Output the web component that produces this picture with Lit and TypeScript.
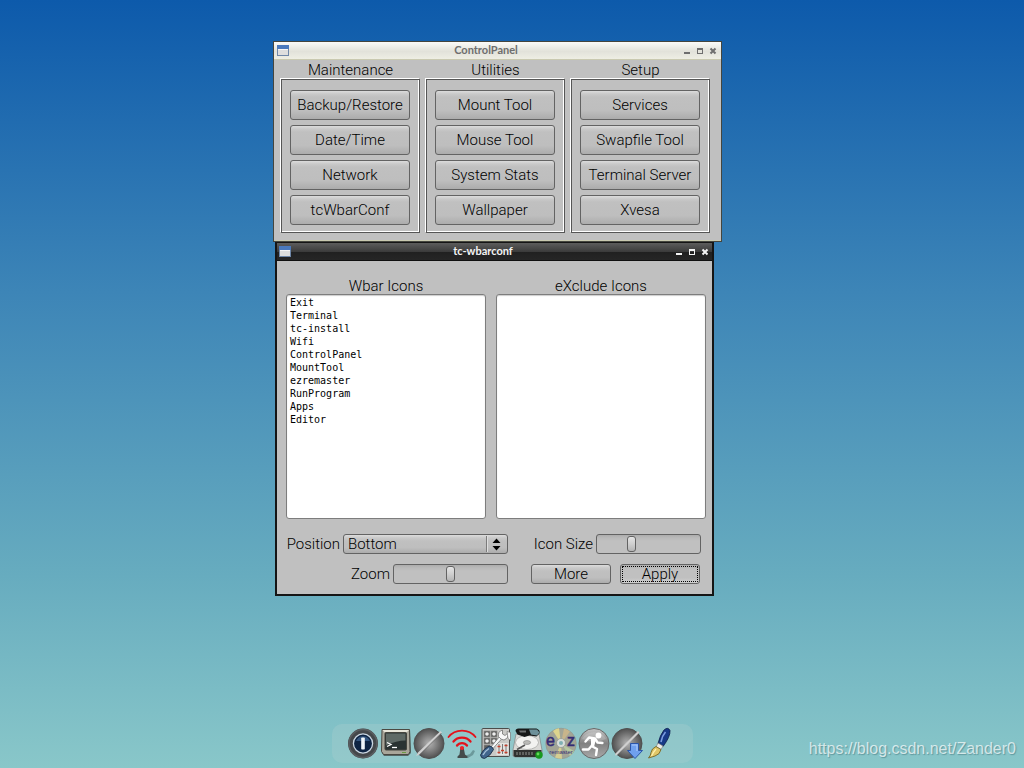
import { LitElement, html, css, svg } from "lit";
import { customElement, property } from "lit/decorators.js";

const GROUPS = [
  { title: "Maintenance", tools: ["Backup/Restore", "Date/Time", "Network", "tcWbarConf"] },
  { title: "Utilities", tools: ["Mount Tool", "Mouse Tool", "System Stats", "Wallpaper"] },
  { title: "Setup", tools: ["Services", "Swapfile Tool", "Terminal Server", "Xvesa"] },
];

const WBAR_ICONS = [
  "Exit", "Terminal", "tc-install", "Wifi", "ControlPanel",
  "MountTool", "ezremaster", "RunProgram", "Apps", "Editor",
];

/* Dock artwork, each on a 32 x 32 grid. */
const DOCK = [
  {
    name: "Exit",
    art: svg`
      <circle cx="16" cy="16.5" r="15" fill="#45484b"/>
      <circle cx="16" cy="16.5" r="14" fill="none" stroke="#5a5e61" stroke-width="1.5"/>
      <circle cx="16" cy="16.5" r="9.600" fill="#0e2443" stroke="#c9d6e2" stroke-width="1.300"/>
      <path d="M9 14a7.500 7.500 0 0 1 14 0z" fill="#33557f"/>
      <rect x="14.200" y="10.500" width="3.600" height="12" rx="0.800" fill="#f1f6fa"/>`,
  },
  {
    name: "Terminal",
    art: svg`
      <path d="M3 3h27l1 23-3 3H4l-2-3z" fill="#33332e" opacity=".65"/>
      <path d="M2 2.500h27.500l.5 22-1.500 3H3.500l-2-3z" fill="#a9a69a" stroke="#4b4942"/>
      <path d="M2.500 3h26.500l-2.500 2.500H5z" fill="#e8e6da"/>
      <rect x="5" y="5.500" width="21.500" height="17.500" rx="1" fill="#2a3332" stroke="#45453e"/>
      <path d="M6 6.500h19.500v7q-9 0-19.500 5z" fill="#5f6a66"/>
      <path d="M7 15.500l4 2-4 2" fill="none" stroke="#fff" stroke-width="1.300"/>
      <path d="M12 20.500h5" stroke="#fff" stroke-width="1.300"/>
      <path d="M22 25.500h4" stroke="#6c9c44" stroke-width="1"/>`,
  },
  {
    name: "tc-install",
    art: svg`
      <circle cx="16" cy="16.500" r="15" fill="url(#sphere)" stroke="#505050"/>
      <path d="M27.500 4l1.500 1.500L6.500 27.500l-3.500 1.500L5 25.500z" fill="#cfcfcf"/>
      <path d="M28.500 6L7 27.500" stroke="#666" stroke-width=".7"/>`,
  },
  {
    name: "Wifi",
    art: svg`
      <path d="M18 29l6-2 3-4 2 1-2 4-5 3z" fill="#51797c" opacity=".6"/>
      <path d="M14.500 20h3l1.500 7.500 2.500 2v1.500h-10v-1.500l2-2z" fill="#444c4c"/>
      <g fill="none" stroke="#e3121b" stroke-linecap="round" stroke-width="2.300">
        <path d="M2.500 10a16.500 15 0 0 1 27 0" stroke-width="1.800"/>
        <path d="M7.500 14.500a10.500 9.500 0 0 1 17 0"/>
        <path d="M11 18.500a6 5.500 0 0 1 10 0"/>
      </g>
      <circle cx="16" cy="21" r="2" fill="#f02329"/>`,
  },
  {
    name: "ControlPanel",
    art: svg`
      <rect x="3" y="1.500" width="27.500" height="28" rx="1" fill="#c9c9c6" stroke="#4c4c4a"/>
      <g fill="#5f5f5d" stroke="#8d8d8b" stroke-width=".7">
        <rect x="5" y="4" width="6" height="6"/><rect x="12" y="4" width="6" height="6"/>
        <rect x="5" y="11" width="6" height="6"/><rect x="12" y="11" width="6" height="6"/>
        <rect x="5" y="18" width="6" height="6"/>
      </g>
      <g fill="#eee">
        <circle cx="8" cy="7" r="1.800"/><circle cx="15" cy="7" r="1.800"/>
        <circle cx="8" cy="14" r="1.800"/><circle cx="15" cy="14" r="1.800"/>
      </g>
      <rect x="17.500" y="16" width="12" height="12" fill="#e4e4e1"/>
      <path d="M20 17v10M23.500 17v10M27 17v10" stroke="#777" stroke-width="1"/>
      <path d="M18.500 19.500h3M22 23.500h3M25.500 18.500h3M18.500 25.500h3M25.500 25.500h3" stroke="#c8402c" stroke-width="1.700"/>
      <path d="M21 9L11.500 20.500l2 1.500L23.500 11z" fill="#f4f6f7" stroke="#666" stroke-width=".7"/>
      <path d="M19.500 9.500q-1-5 4-6.500v4l2.500 1.500 3-2.500q1 5-4 7-3 0-5.500-3.500z" fill="#f7f7f7" stroke="#666" stroke-width=".7"/>
      <path d="M28 4.500l3.500 1v8l-2.500-2z" fill="#f4f4f4" stroke="#666" stroke-width=".6"/>
      <path d="M10 19q3.500 0 4.500 3.500-3 6.500-9 9-3.500 0-4-3.500 2-5.500 8.500-9z" fill="#41658c" stroke="#1c3048" stroke-width=".9"/>
      <path d="M10 21.500q-4.500 3-6 6.500" stroke="#a4bfd8" stroke-width="1.500" fill="none"/>`,
  },
  {
    name: "MountTool",
    art: svg`
      <path d="M4 7h23l3 16v6l-2 1H3l-2-1v-6z" fill="#d8d8d5" stroke="#777" stroke-width=".6"/>
      <path d="M1.500 23h28v6l-1.500 1H3l-1.500-1z" fill="#303231"/>
      <path d="M5 25v3M8 25v3M11 25v3M14 25v3M17 25v3M20 25v3" stroke="#8f9391" stroke-width="1"/>
      <ellipse cx="15" cy="15.500" rx="11.500" ry="7" fill="#f2f2f0" stroke="#a0a09d" stroke-width=".7"/>
      <ellipse cx="15" cy="15.500" rx="3.600" ry="2" fill="#b9b9b6" stroke="#777" stroke-width=".5"/>
      <path d="M5 22.500l8-4.500" stroke="#555" stroke-width="1.600"/>
      <path d="M3.500 4q0-2.500 3-2.500h18q4 1.500 3 5l-3 3-7-1-5 1.500-7-2.500z" fill="#171919"/>
      <path d="M17 2.500h8l2.500 3-2.500 3-6-1z" fill="#6d9099"/>
      <path d="M7 3.500h7v2H8z" fill="#6c6f6f"/>
      <circle cx="27" cy="28" r="3.700" fill="#18991f"/>
      <circle cx="26" cy="27" r="1.400" fill="#66d85c"/>`,
  },
  {
    name: "ezremaster",
    art: svg`
      <circle cx="16" cy="16.500" r="15.300" fill="#a3a596" stroke="#8d968d" stroke-width=".6"/>
      <path d="M16 16.500L8 4q3-2.500 6-2.800z" fill="#ddd48d"/>
      <path d="M16 16.500L19 1.500q4 1 6 3z" fill="#c8b58b"/>
      <path d="M16 16.500L10 30.500q4 1.500 7 1.300z" fill="#d5ce91"/>
      <path d="M16 16.500L25 29q3-2 4-5z" fill="#b6c7a0"/>
      <circle cx="16" cy="16" r="4.500" fill="#d8deda" stroke="#8c928c" stroke-width=".7"/>
      <circle cx="16" cy="16" r="2" fill="#7fb0b4"/>
      <text x="1" y="19" font-family="Liberation Sans, sans-serif" font-size="16" fill="#342c74" stroke="#342c74" stroke-width=".5">e</text>
      <text x="22" y="19" font-family="Liberation Sans, sans-serif" font-size="16" fill="#342c74" stroke="#342c74" stroke-width=".5">z</text>
      <text x="16" y="27" text-anchor="middle" font-family="Liberation Sans, sans-serif" font-size="6" fill="#342c74">remaster</text>`,
  },
  {
    name: "RunProgram",
    art: svg`
      <circle cx="16" cy="16.500" r="15" fill="url(#steel)" stroke="#686868"/>
      <path d="M4 12a13 11 0 0 1 24 0q-12 5-24 0z" fill="#fff" opacity=".18"/>
      <circle cx="20.500" cy="8.500" r="2.900" fill="#fff"/>
      <path d="M7.500 14.500l3.500-4 6 1 2.500 4 5 .5M17 12l-3.500 7 5.500 3-1 6M13.500 19l-3 3.500H5" fill="none" stroke="#fff" stroke-width="2.400" stroke-linecap="round" stroke-linejoin="round"/>
      <path d="M13 12h5l-2 8-3-1z" fill="#fff"/>`,
  },
  {
    name: "Apps",
    art: svg`
      <circle cx="16" cy="16.500" r="15" fill="url(#sphere)" stroke="#505050"/>
      <path d="M27 4l1.500 1.500L6 28l-2 .5.5-2z" fill="#cfcfcf"/>
      <path d="M19.500 16.500h8v7h4l-7.500 8-7.500-8h3z" fill="#6fa0ee" stroke="#2b55a8"/>
      <path d="M21 18h5v6" fill="none" stroke="#a9c8fb" stroke-width="1.200"/>`,
  },
  {
    name: "Editor",
    art: svg`
      <path d="M20 3q4-3.500 6 .5.500 6-7 16l-5-3Q16 8 20 3z" fill="#173a87" stroke="#0c1c4a" stroke-width=".8"/>
      <path d="M21.500 5q-3.500 4-4.500 10" fill="none" stroke="#7c9de0" stroke-width="1.600"/>
      <path d="M14 16l5 3-2 3.500-5-2.500z" fill="#ececea" stroke="#77766c" stroke-width=".6"/>
      <path d="M12 19.500l5 3q-1 5-6 6.500l-6.500 2q2.500-3 2.500-5.500.5-4 5-6z" fill="#e0c667" stroke="#6c5a1c" stroke-width=".8"/>
      <path d="M12 22q-2.500 3-4.500 7" stroke="#fff0ac" stroke-width="1.200" fill="none"/>`,
  },
];

@customElement("desk-window")
export class DeskWindow extends LitElement {
  @property() caption = "";
  @property({ type: Boolean, reflect: true }) active = false;

  static styles = css`
    :host {
      display: block;
      box-sizing: border-box;
      background: #c0c0c0;
      border: 1px solid #45463f;
    }
    :host([active]) {
      border: 2px solid #151515;
      border-top-width: 1px;
    }
    .bar {
      display: flex;
      align-items: center;
      height: 16px;
      padding: 0 3px 1px;
      border-bottom: 1px solid #c9c9b0;
      background: linear-gradient(#fbfbf9, #e2e2da 55%, #eeeee4);
      color: #6e6e6e;
    }
    :host([active]) .bar {
      padding: 0 2px 1px;
      border-bottom: 1px solid #101010;
      background: linear-gradient(#5c5c5c, #3c3c3c 50%, #202020 51%, #262626);
      color: #f4f4f4;
    }
    .caption {
      flex: 1;
      margin: 0;
      text-align: center;
      font: 700 11px/16px Lato, "Open Sans", sans-serif;
    }
    .controls {
      display: flex;
      gap: 4px;
    }
    .controls button {
      display: block;
      width: 9px;
      height: 9px;
      padding: 0;
      border: 0;
      background: none;
      color: inherit;
    }
    svg {
      display: block;
    }
    .body {
      border-bottom: 1px solid #c9c9b0;
    }
    :host([active]) .body {
      border: 0;
    }
  `;

  render() {
    return html`
      <div class="bar">
        <svg width="12" height="11" viewBox="0 0 12 11" aria-hidden="true">
          <rect x=".5" y=".5" width="11" height="10" fill="#dedede" stroke="#6f87a8" />
          <rect x="0" y="0" width="12" height="4" fill="#4a79bd" />
          <path d="M1 4.500h10" stroke="#f6f6f6" />
        </svg>
        <h1 class="caption">${this.caption}</h1>
        <span class="controls">
          <button aria-label="Minimize">
            <svg width="9" height="9" viewBox="0 0 9 9"><path d="M1 6h6v2H1z" fill="currentColor" /></svg>
          </button>
          <button aria-label="Maximize">
            <svg width="9" height="9" viewBox="0 0 9 9"><path d="M1 2h6v6H1zM2 4v3h4V4z" fill="currentColor" fill-rule="evenodd" /></svg>
          </button>
          <button aria-label="Close">
            <svg width="9" height="9" viewBox="0 0 9 9"><path d="M1.500 2.500l5 5M6.500 2.500l-5 5" stroke="currentColor" stroke-width="2" /></svg>
          </button>
        </span>
      </div>
      <div class="body"><slot></slot></div>
    `;
  }
}

@customElement("app-root")
export class AppRoot extends LitElement {
  static styles = css`
    :host {
      display: block;
      position: relative;
      box-sizing: border-box;
      min-height: 100vh;
      overflow: hidden;
      background: linear-gradient(#0d5aab, #3d85b7 38%, #67acbf 75%, #89c7c9);
      color: #000;
      font: 300 15px/18px Roboto, "Liberation Sans", sans-serif;
    }
    * {
      box-sizing: border-box;
    }
    .control-panel {
      position: absolute;
      left: 273px;
      top: 41px;
      width: 449px;
      z-index: 2;
    }
    .wbar-conf {
      position: absolute;
      left: 275px;
      top: 242px;
      width: 439px;
    }
    .groups {
      display: flex;
      gap: 6px;
      padding: 1px 11px 7px 7px;
    }
    .group {
      flex: 1;
    }
    .heading {
      display: block;
      margin: 0;
      font: inherit;
      text-align: center;
    }
    .frame {
      display: flex;
      flex-direction: column;
      gap: 5px;
      padding: 10px 9px 7px 8px;
      border: 1px solid #555;
      box-shadow: -1px -1px 0 #fff, inset -1px -1px 0 #fff;
    }
    .btn {
      height: 30px;
      padding: 0;
      border: 1px solid #636363;
      border-radius: 3px;
      background: linear-gradient(#dcdcdc, #c9c9c9 3px, #c0c0c0 6px, #bebebe 70%, #acacac);
      color: inherit;
      font: inherit;
      text-align: center;
    }
    .btn.small {
      width: 80px;
      height: 20px;
      line-height: 16px;
    }
    .btn.default {
      background: linear-gradient(#b0b0b0, #c0c0c0 4px, #c0c0c0 70%, #d0d0d0);
      outline: 1px dotted #000;
      outline-offset: -3px;
    }
    .settings {
      padding: 17px 6px 10px 9px;
    }
    .lists {
      display: grid;
      grid-template-columns: 20fr 21fr;
      gap: 10px;
      line-height: 16px;
    }
    .list {
      display: block;
      width: 100%;
      height: 225px;
      margin: 0;
      padding: 2px 1px;
      overflow: hidden;
      border: 1px solid #7d7d7d;
      border-radius: 3px;
      outline: none;
      background: #fff;
      box-shadow: inset 0 1px 1px #ccc;
      color: #000;
      font: 10px "DejaVu Sans Mono", monospace;
    }
    .list option {
      height: 13px;
      min-height: 13px;
      padding: 0 2px;
    }
    .options {
      display: flex;
      justify-content: space-between;
      padding: 15px 5px 0 0;
    }
    .column {
      display: flex;
      flex-direction: column;
      gap: 10px;
    }
    .left {
      width: 222px;
    }
    .right {
      width: 170px;
    }
    .row {
      display: flex;
      align-items: center;
      justify-content: flex-end;
      gap: 3px;
      height: 20px;
    }
    .row.buttons {
      justify-content: flex-start;
      gap: 9px;
    }
    .picker {
      position: relative;
      width: 165px;
    }
    .picker select {
      display: block;
      width: 100%;
      height: 20px;
      padding: 0 24px 0 4px;
      border: 1px solid #636363;
      border-radius: 3px;
      appearance: none;
      background: linear-gradient(#dcdcdc, #c9c9c9 3px, #c0c0c0 6px, #bebebe 70%, #acacac);
      color: inherit;
      font: inherit;
    }
    .arrows {
      position: absolute;
      right: 0;
      top: 0;
      pointer-events: none;
    }
    input[type="range"] {
      width: 115px;
      height: 20px;
      margin: 0;
      padding: 1px;
      border: 1px solid #636363;
      border-radius: 3px;
      appearance: none;
      background: linear-gradient(#adadad, #bababa 3px, #c0c0c0 6px);
    }
    input.short {
      width: 105px;
    }
    input[type="range"]::-webkit-slider-thumb {
      width: 9px;
      height: 16px;
      border: 1px solid #636363;
      border-radius: 3px;
      appearance: none;
      background: linear-gradient(#e4e4e4, #cfcfcf 50%, #b4b4b4);
    }
    .dock {
      position: absolute;
      left: 0;
      right: 0;
      bottom: 5px;
      display: flex;
      justify-content: center;
    }
    .dock nav {
      display: flex;
      gap: 1px;
      padding: 3px 17px 4px 15px;
      border-radius: 10px;
      background: rgb(170 205 205 / 35%);
    }
    .dock a,
    .dock svg {
      display: block;
    }
    .mark {
      position: absolute;
      right: 8px;
      bottom: 10px;
      margin: 0;
      color: rgb(255 255 255 / 70%);
      font: 16px/18px "Liberation Sans", sans-serif;
      text-shadow: 1px 1px 1px rgb(60 110 115 / 50%);
    }
  `;

  render() {
    return html`
      <desk-window class="control-panel" caption="ControlPanel">
        <div class="groups">
          ${GROUPS.map(
            (g) => html`
              <section class="group">
                <h2 class="heading">${g.title}</h2>
                <div class="frame">
                  ${g.tools.map((t) => html`<button class="btn">${t}</button>`)}
                </div>
              </section>
            `
          )}
        </div>
      </desk-window>

      <desk-window class="wbar-conf" caption="tc-wbarconf" active>
        <div class="settings">
          <div class="lists">
            <div>
              <label class="heading" for="included">Wbar Icons</label>
              <select class="list" id="included" size="17">
                ${WBAR_ICONS.map((n) => html`<option>${n}</option>`)}
              </select>
            </div>
            <div>
              <label class="heading" for="excluded">eXclude Icons</label>
              <select class="list" id="excluded" size="17"></select>
            </div>
          </div>
          <div class="options">
            <div class="column left">
              <div class="row">
                <label for="position">Position</label>
                <div class="picker">
                  <select id="position"><option>Bottom</option></select>
                  <svg class="arrows" width="22" height="20" viewBox="0 0 22 20" aria-hidden="true">
                    <path d="M.5 2v16" stroke="#7b7b7b" /><path d="M1.500 2v16" stroke="#dedede" />
                    <path d="M6.500 9l4-4.500 4 4.500zM6.500 12l4 4.500 4-4.500z" fill="#000" />
                  </svg>
                </div>
              </div>
              <div class="row">
                <label for="zoom">Zoom</label>
                <input id="zoom" type="range" min="0" max="100" value="50" />
              </div>
            </div>
            <div class="column right">
              <div class="row">
                <label for="size">Icon Size</label>
                <input id="size" class="short" type="range" min="0" max="100" value="31" />
              </div>
              <div class="row buttons">
                <button class="btn small">More</button>
                <button class="btn small default">Apply</button>
              </div>
            </div>
          </div>
        </div>
      </desk-window>

      <div class="dock">
        <nav aria-label="Wbar">
          ${DOCK.map(
            (d) => html`
              <a href="#" aria-label=${d.name}>
                <svg width="32" height="32" viewBox="0 0 32 32" aria-hidden="true">
                  <defs>
                    <radialGradient id="sphere"><stop offset="0" stop-color="#b4b4b4" /><stop offset="1" stop-color="#505050" /></radialGradient>
                    <linearGradient id="steel" x2="0" y2="1"><stop offset="0" stop-color="#c4c4c4" /><stop offset=".5" stop-color="#828282" /><stop offset="1" stop-color="#a9a9a9" /></linearGradient>
                  </defs>
                  ${d.art}
                </svg>
              </a>
            `
          )}
        </nav>
      </div>
      <p class="mark">https://blog.csdn.net/Zander0</p>
    `;
  }
}
